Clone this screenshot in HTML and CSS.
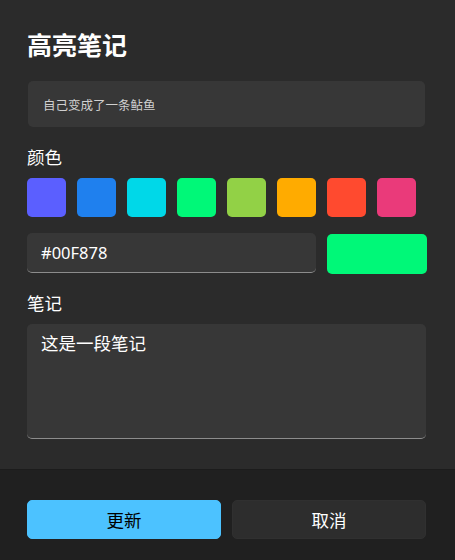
FILE: index.html
```html
<!DOCTYPE html>
<html lang="zh-CN">
<head>
<meta charset="utf-8">
<title>高亮笔记</title>
<link rel="stylesheet" href="styles.css">
</head>
<body>
<div class="dialog">
  <div class="content">
    <h1 class="title">高亮笔记</h1>
    <div class="quote">自己变成了一条鲇鱼</div>
    <div class="label">颜色</div>
    <div class="swatches">
      <div class="swatch c1"></div>
      <div class="swatch c2"></div>
      <div class="swatch c3"></div>
      <div class="swatch c4"></div>
      <div class="swatch c5"></div>
      <div class="swatch c6"></div>
      <div class="swatch c7"></div>
      <div class="swatch c8"></div>
    </div>
    <div class="hex-row">
      <div class="field hex">#00F878</div>
      <div class="preview"></div>
    </div>
    <div class="label label-note">笔记</div>
    <div class="field note">这是一段笔记</div>
  </div>
  <div class="footer">
    <button class="btn primary">更新</button>
    <button class="btn secondary">取消</button>
  </div>
</div>
</body>
</html>
```

FILE: styles.css
```css
* { box-sizing: border-box; }
html, body {
  margin: 0;
  padding: 0;
  background: #2b2b2b;
}
body {
  font-family: "Noto Sans", "Noto Sans CJK SC", sans-serif;
  color: #ffffff;
}
.dialog {
  width: 455px;
  height: 560px;
  display: flex;
  flex-direction: column;
}
.content {
  flex: 1;
  padding: 29px 28px 0 27px;
  display: flex;
  flex-direction: column;
}
.title {
  margin: 0;
  font-size: 25px;
  line-height: 33px;
  font-weight: 700;
  color: #ffffff;
}
.quote {
  margin: 19px 2px 0 1px;
  height: 46px;
  background: #373737;
  border-radius: 5px;
  padding: 0 15px;
  display: flex;
  align-items: center;
  font-size: 12.5px;
  color: #d0d0d0;
}
.label {
  margin-top: 18px;
  font-size: 17.5px;
  line-height: 24px;
  color: #ffffff;
}
.label-note {
  margin-top: 17px;
}
.swatches {
  margin-top: 9px;
  display: flex;
  gap: 11px;
}
.swatch {
  width: 39px;
  height: 39px;
  border-radius: 5px;
}
.c1 { background: #5b5fff; }
.c2 { background: #1f80ee; }
.c3 { background: #00d8e8; }
.c4 { background: #00f878; }
.c5 { background: #92d146; }
.c6 { background: #ffab00; }
.c7 { background: #ff4a2f; }
.c8 { background: #ea3a7a; }
.hex-row {
  margin-top: 16px;
  display: flex;
  gap: 11px;
}
.field {
  background: #373737;
  border-radius: 5px;
  border-bottom: 1px solid #8c8c8c;
  color: #ffffff;
}
.hex {
  width: 289px;
  height: 40px;
  padding: 0 14px;
  display: flex;
  align-items: center;
  font-size: 16.5px;
}
.preview {
  width: 100px;
  height: 40px;
  margin-top: 1px;
  border-radius: 5px;
  background: #00f878;
}
.note {
  margin-top: 9px;
  width: 399px;
  height: 115px;
  padding: 7px 14px;
  font-size: 17.5px;
  line-height: 24px;
}
.footer {
  height: 91px;
  background: #202020;
  border-top: 1px solid #1c1c1c;
  padding: 30px 29px 0 27px;
  display: flex;
  gap: 11px;
  align-items: flex-start;
}
.btn {
  width: 194px;
  height: 39px;
  border-radius: 5px;
  font-family: "Noto Sans", "Noto Sans CJK SC", sans-serif;
  font-size: 17.5px;
  padding: 0;
  border: 1px solid transparent;
}
.primary {
  background: #4cc2ff;
  color: #000000;
  border-color: #4cc2ff;
}
.secondary {
  background: #2d2d2d;
  color: #ffffff;
  border-color: #303030;
}
```
